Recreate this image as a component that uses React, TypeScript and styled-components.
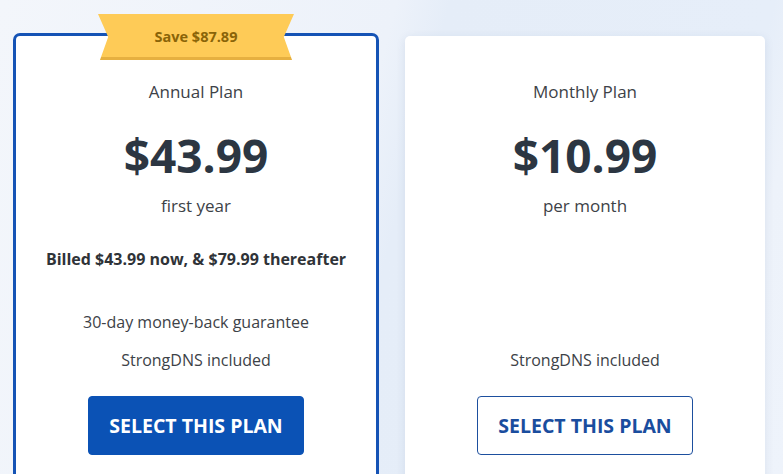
import * as React from 'react';
import styled, { createGlobalStyle } from 'styled-components';

const GlobalStyle = createGlobalStyle`
  html, body {
    margin: 0;
    padding: 0;
  }
  body {
    font-family: "Open Sans", "Liberation Sans", sans-serif;
    color: #3d4247;
  }
`;

type Plan = {
  name: string,
  price: string,
  period: string,
  billed?: string,
  features: string[],
  featured?: boolean,
  badge?: string,
}

const plans: Plan[] = [
  {
    name: 'Annual Plan',
    price: '$43.99',
    period: 'first year',
    billed: 'Billed $43.99 now, & $79.99 thereafter',
    features: ['30-day money-back guarantee', 'StrongDNS included'],
    featured: true,
    badge: 'Save $87.89',
  },
  {
    name: 'Monthly Plan',
    price: '$10.99',
    period: 'per month',
    features: ['StrongDNS included'],
  },
];

const PlanCard = ({ plan }: { plan: Plan }) => (
  <Card $featured={!!plan.featured}>
    {plan.badge && <Ribbon>{plan.badge}</Ribbon>}
    <Name>{plan.name}</Name>
    <Price>{plan.price}</Price>
    <Period>{plan.period}</Period>
    <Body>
      {plan.billed && <Billed>{plan.billed}</Billed>}
      <Features>
        {plan.features.map((feature) => (
          <Feature key={feature}>{feature}</Feature>
        ))}
      </Features>
    </Body>
    <SelectButton $primary={!!plan.featured}>SELECT THIS PLAN</SelectButton>
  </Card>
);

export default function App() {
  return (
    <Page>
      <GlobalStyle />
      <Cards>
        {plans.map((plan) => (
          <PlanCard key={plan.name} plan={plan} />
        ))}
      </Cards>
    </Page>
  );
}

const Page = styled.div`
  width: 783px;
  height: 474px;
  overflow: hidden;
  background: linear-gradient(
    104deg,
    #f3f6fb 0%,
    #edf2fa 44%,
    #e5edf8 50%,
    #e6eef9 86%,
    #edf2fa 91%,
    #eef3fb 100%
  );
`;

const Cards = styled.div`
  display: flex;
  align-items: flex-start;
  gap: 26px;
  padding-left: 13px;
`;

const Card = styled.div<{ $featured: boolean }>`
  position: relative;
  box-sizing: border-box;
  display: flex;
  flex-direction: column;
  align-items: center;
  width: ${props => (props.$featured ? '366px' : '360px')};
  height: 520px;
  margin-top: ${props => (props.$featured ? '33px' : '36px')};
  padding-top: 43px;
  background: #ffffff;
  border: ${props => (props.$featured ? '3px solid #1553b5' : 'none')};
  border-radius: ${props => (props.$featured ? '7px' : '5px')};
  box-shadow: ${props => (props.$featured ? 'none' : '0 2px 10px rgba(40, 70, 120, 0.10)')};
`;

const Ribbon = styled.div`
  position: absolute;
  top: -22px;
  left: 50%;
  transform: translateX(-50%);
  width: 196px;
  height: 46px;
  display: flex;
  align-items: center;
  justify-content: center;
  padding-bottom: 1px;
  box-sizing: border-box;
  font-size: 14.5px;
  font-weight: 700;
  color: #8a6408;
  background: linear-gradient(#fecb57 0, #fecb57 94%, #e6b040 94%);
  clip-path: polygon(0 0, 100% 0, 94.8% 50%, 99% 100%, 1% 100%, 5.2% 50%);
`;

const Name = styled.div`
  font-size: 17px;
  line-height: 26px;
  color: #3d4247;
`;

const Price = styled.div`
  margin-top: 22px;
  font-size: 46px;
  line-height: 56px;
  font-weight: 700;
  color: #2c3642;
`;

const Period = styled.div`
  margin-top: 10px;
  font-size: 17px;
  line-height: 26px;
  color: #3d4247;
`;

const Body = styled.div`
  display: flex;
  flex-direction: column;
  align-items: center;
  height: 152px;
`;

const Billed = styled.div`
  margin-top: 29px;
  font-size: 16px;
  line-height: 22px;
  font-weight: 700;
  color: #2f3338;
`;

const Features = styled.div`
  margin-top: auto;
  display: flex;
  flex-direction: column;
  align-items: center;
  gap: 16px;
`;

const Feature = styled.div`
  font-size: 16px;
  line-height: 22px;
  color: #3d4247;
`;

const SelectButton = styled.button<{ $primary: boolean }>`
  margin-top: 25px;
  box-sizing: border-box;
  width: 216px;
  height: 59px;
  border-radius: 4px;
  border: 1px solid ${props => (props.$primary ? '#0b52b5' : '#1d4f9e')};
  background: ${props => (props.$primary ? '#0b52b5' : '#ffffff')};
  color: ${props => (props.$primary ? '#ffffff' : '#1a4d9e')};
  font-family: "Open Sans", "Liberation Sans", sans-serif;
  font-size: 19.5px;
  font-weight: 700;
  cursor: pointer;
`;
